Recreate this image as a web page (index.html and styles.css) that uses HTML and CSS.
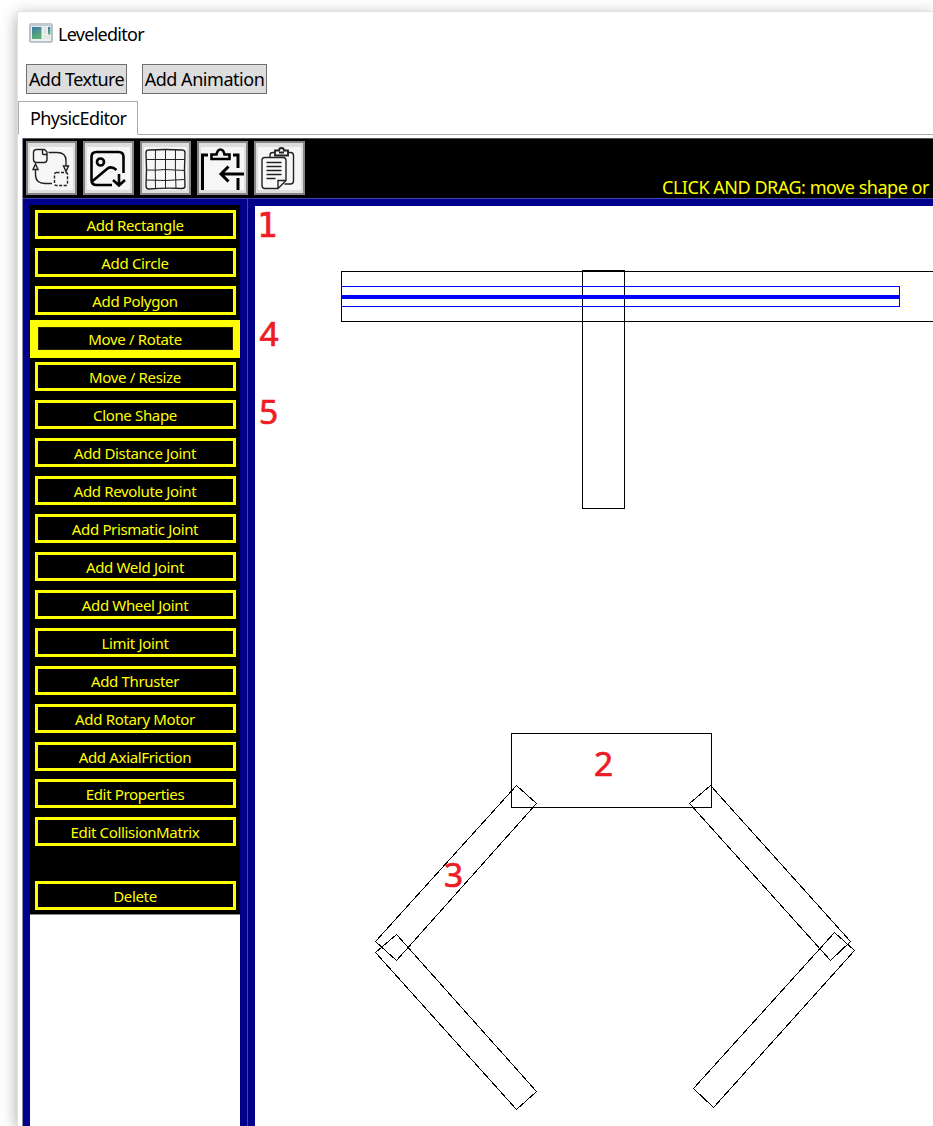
FILE: index.html
```html
<!DOCTYPE html>
<html lang="en">
<head>
<meta charset="utf-8">
<title>Leveleditor</title>
<link rel="stylesheet" href="styles.css">
</head>
<body>
<div class="window">
  <header class="titlebar">
    <svg class="app-icon" width="24" height="20" viewBox="0 0 24 20">
      <defs><linearGradient id="g" x1="0" y1="0" x2=".4" y2="1"><stop offset="0" stop-color="#3c78a8"/><stop offset="1" stop-color="#5cb070"/></linearGradient></defs>
      <rect x="1" y="1" width="22" height="18" rx="1" fill="#eef0f3" stroke="#aab2bc" stroke-width="1.6"/>
      <path d="M1 2.200h22" stroke="#c3cad3" stroke-width="2"/>
      <rect x="3" y="4" width="9.500" height="12" fill="url(#g)"/>
      <rect x="14" y="4" width="4" height="7" fill="#e3e5e5"/><rect x="14" y="12" width="7.500" height="4" fill="#e6e6e6"/>
      <rect x="19" y="4" width="2.400" height="7.500" fill="url(#g)"/>
    </svg>
    <span>Leveleditor</span>
  </header>
  <div class="actions">
    <button class="action texture"><span>Add Texture</span></button>
    <button class="action animation"><span>Add Animation</span></button>
  </div>
  <div class="tabs"><div class="tab"><span>PhysicEditor</span></div></div>
  <main class="editor">
    <div class="toolbar">
      <button class="tool"><svg viewBox="0 0 51 54"><g fill="none" stroke="#222" stroke-width="1.4"><path d="M10.500 8.500h8l2.500 2.500v7.500q0 3-3 3h-7.500q-3 0-3-3v-7q0-3 3-3zM16.500 9v3.500q0 1 1 1h3.500M22.500 11.500h8.500q9 0 9 8v5M26 42.500h-7q-9.500 0-9.500-9v-4.500"/><path d="M37.500 25h5l-2.500 5.500zM7 28.500h5l-2.500-5.500z"/><rect x="28.500" y="31.500" width="13" height="13" rx="2" stroke-dasharray="3 1.500"/></g></svg></button>
      <button class="tool"><svg viewBox="0 0 51 54"><g fill="none" stroke="#000" stroke-width="2.600"><path d="M29 44H13.500q-5 0-5-5V16q0-5 5-5h22q5 0 5 5v16M9 40.500l15.500-13q4-3 9 1.500"/><circle cx="17.500" cy="21" r="3.500"/><path d="M36 33v11M30 39l6 5.500 6-5.500"/></g></svg></button>
      <button class="tool"><svg viewBox="0 0 51 54"><g fill="none" stroke="#222"><path d="M8.500 9q17-1 34 0 2.500 0 2.500 3-1 16 0 33 0 2.500-3 2.500-16-1-33 .5-3 0-3-3Q7 28 6 12q0-3 2.500-3z" stroke-width="1.400"/><path d="M15.500 9q-.5 19 0 38.500M25.500 9v38.500M35.500 9q-.5 20 .5 38.500M6.500 18.500h38M6.500 29q9 .500 19-.5l19.500 1M6.500 39l19 .5 19-1" stroke-width="1"/></g></svg></button>
      <button class="tool"><svg viewBox="0 0 51 54"><g fill="none" stroke="#000" stroke-width="3"><path d="M5.500 49V14h5.500M36 14h5v13M41 37v12M47 33H25M31.500 25.500L24 33l7.500 7.500"/><path d="M14.500 18v-4.500h5q1-5 4-5t4 5h5V18z" stroke-width="2.600"/></g></svg></button>
      <button class="tool"><svg viewBox="0 0 51 54"><g fill="#f8f8f8" stroke="#222" stroke-width="1.400"><path d="M16 16v-2q0-2.500 3-2.500h17.500q3 0 3 3v25.500q0 3-3 3h-6" fill="none"/><path d="M10.500 16.500h18.500q3 0 3 3V39.500l-8 8h-13q-3 0-3-3V19.500q0-3 2.500-3z"/><path d="M32 39.500h-8V47.500M12.500 21.500h15M12.500 25.500h15M12.500 29.500h15M12.500 33.500h15M12.500 37.500h9" fill="none"/><path d="M21 9.500h4q0-2.500 2.500-2.500t2.500 2.500h4v5H21z" stroke-width="1.800"/><path d="M25 11.500h5" stroke-width="2"/></g></svg></button>
      <p class="hint">CLICK AND DRAG: move shape or</p>
    </div>
    <div class="workspace">
      <aside class="sidebar">
        <nav class="menu">
          <div class="row"><button class="mode">Add Rectangle</button></div>
          <div class="row"><button class="mode">Add Circle</button></div>
          <div class="row"><button class="mode">Add Polygon</button></div>
          <div class="row selected"><button class="mode">Move / Rotate</button></div>
          <div class="row"><button class="mode">Move / Resize</button></div>
          <div class="row"><button class="mode">Clone Shape</button></div>
          <div class="row"><button class="mode">Add Distance Joint</button></div>
          <div class="row"><button class="mode">Add Revolute Joint</button></div>
          <div class="row"><button class="mode">Add Prismatic Joint</button></div>
          <div class="row"><button class="mode">Add Weld Joint</button></div>
          <div class="row"><button class="mode">Add Wheel Joint</button></div>
          <div class="row"><button class="mode">Limit Joint</button></div>
          <div class="row"><button class="mode">Add Thruster</button></div>
          <div class="row"><button class="mode">Add Rotary Motor</button></div>
          <div class="row"><button class="mode">Add AxialFriction</button></div>
          <div class="row"><button class="mode">Edit Properties</button></div>
          <div class="row"><button class="mode">Edit CollisionMatrix</button></div>
          <div class="row delete"><button class="mode">Delete</button></div>
        </nav>
      </aside>
      <div class="splitter"></div>
      <svg class="canvas" width="678" height="920" viewBox="255 206 678 920">
        <g class="shape">
          <path d="M940 271.500H341.500V321.500H940"/>
          <path d="M582.500 270.500H624.500V508.500H582.500Z"/>
          <rect x="511.500" y="733.500" width="200" height="74"/>
          <path d="M516.500 785.500L536.500 803.500L396.500 960.500L375.500 941.500Z"/>
          <path d="M396.500 934.500L536.500 1091.500L516.500 1109.500L375.500 952.500Z"/>
          <path d="M710.500 785.500L850.500 941.500L830.500 960.500L689.500 803.500Z"/>
          <path d="M834.500 932.500L854.500 950.500L713.500 1107.500L693.500 1088.500Z"/>
        </g>
        <g class="joint"><path d="M342 286.500H899.500V306.500H342"/><path class="axis" d="M342 297H900"/></g>
        <g class="label">
          <text class="one" x="257" y="237">1</text>
          <text x="259.500" y="346">4</text>
          <text x="259" y="424">5</text>
          <text x="594" y="776">2</text>
          <text x="444" y="887">3</text>
        </g>
      </svg>
    </div>
  </main>
</div>
</body>
</html>
```
FILE: styles.css
```css
* { box-sizing: border-box; }
body {
  margin: 0;
  width: 933px;
  height: 1126px;
  overflow: hidden;
  padding: 11px 0 0 17px;
  background: #fff;
  color: #000;
  font-family: "Noto Sans", "Open Sans", sans-serif;
  font-size: 18px;
}
button { font: inherit; margin: 0; padding: 0; white-space: nowrap; }
.window {
  width: 916px;
  height: 1115px;
  border: 1px solid #e2e2e2;
  border-width: 1px 0 0 1px;
  background: #fff;
  box-shadow: 0 4px 15px rgba(0, 0, 0, .35);
}

/* Title and top-level actions */
.titlebar {
  height: 52px;
  padding: 11px 0 0 11px;
  display: flex;
  gap: 5px;
  line-height: 23px;
  letter-spacing: -.72px;
}
.app-icon { flex: none; }
.actions { height: 37px; display: flex; gap: 15px; padding-left: 8px; }
.action {
  height: 30px;
  border: 1px solid #707070;
  background: #ddd;
  line-height: 28px;
  display: flex;
  justify-content: center;
}
.texture { width: 101px; letter-spacing: -.55px; }
.animation { width: 125px; letter-spacing: -.46px; }
.tabs { height: 34px; border-bottom: 1px solid #acacac; }
.tab {
  width: 120px;
  height: 34px;
  border: 1px solid #acacac;
  border-bottom-color: #fff;
  background: #fff;
  padding-left: 11px;
  line-height: 33px;
  letter-spacing: -.6px;
}

/* Editor toolbar */
.editor { margin: 3px 0 0 4px; border-left: 1px solid #8c8ca8; }
.toolbar {
  height: 60px;
  background: #000;
  border-top: 1px solid #555;
  padding: 2px 0 0 3px;
  display: flex;
  gap: 6px;
}
.tool {
  flex: none;
  width: 51px;
  height: 54px;
  border: 2px solid #858585;
  background: linear-gradient(#f6f6f6, #f6f6f6) 2px 4px / 43px 43px no-repeat #dedede;
}
.tool svg { display: block; width: 51px; height: 54px; margin: -2px; }
.hint {
  margin: 34px 0 0 351px;
  color: #ff0;
  line-height: 25px;
  letter-spacing: -.47px;
  white-space: nowrap;
}

/* Mode menu */
.workspace { display: flex; height: 928px; border-top: 1px solid #4343ad; background: #00008b; }
.sidebar {
  width: 217px;
  padding-left: 7px;
  border-top: 7px solid #00008b;
  background: linear-gradient(#00008b, #00008b) 0 0 / 7px 100% no-repeat #fff;
}
.menu {
  width: 210px;
  height: 709px;
  margin-top: -1px;
  padding-top: .4px;
  background: #000;
  box-shadow: 0 1px #888;
}
.row { height: 37.94px; padding: 5px 4px 0 5px; }
.mode {
  display: block;
  width: 201px;
  height: 29px;
  border: 3px solid #ff0;
  background: #000;
  color: #ff0;
  font-size: 15px;
  line-height: 24px;
  letter-spacing: -.34px;
  text-align: center;
  padding-right: 1px;
}
.selected { background: linear-gradient(#ff0, #ff0) 0 1px no-repeat; box-shadow: 0 1px #ff0; }
.selected .mode { box-shadow: inset 0 0 0 1px #220; }
.delete { padding-top: 31px; height: 62px; }
.splitter {
  width: 15px;
  background: linear-gradient(#4343ad, #4343ad) 7px 0 / 1px 100% no-repeat #00008b;
}

/* Drawing surface */
.canvas { display: block; flex: none; margin-top: 7px; background: #fff; }
.shape { fill: none; stroke: #000; shape-rendering: crispEdges; }
.joint { fill: none; stroke: #00f; shape-rendering: crispEdges; }
.axis { stroke-width: 4px; }
.label { fill: #ed1c24; stroke: #ed1c24; stroke-width: .7px; font-size: 33.5px; }
.one { font-family: "DejaVu Sans Mono", monospace; }
```
